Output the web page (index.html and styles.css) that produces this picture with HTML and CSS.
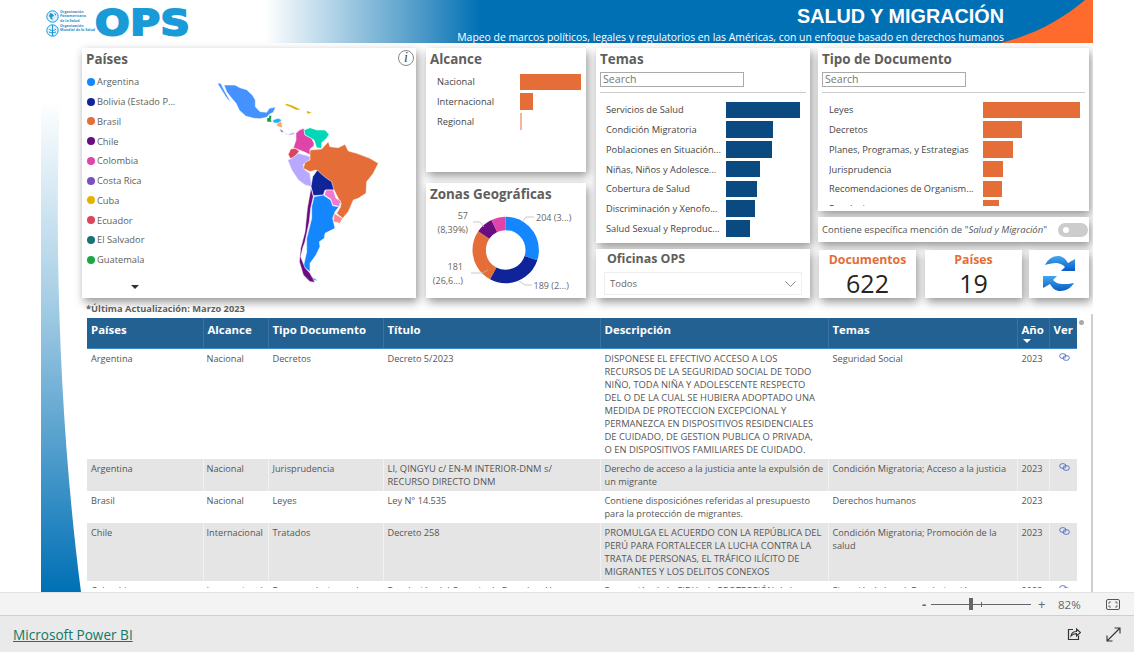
FILE: index.html
```html
<!DOCTYPE html>
<html lang="es">
<head>
  <meta charset="UTF-8" />
  <title>Salud y Migración</title>
  <link rel="stylesheet" href="styles.css">
</head>
<body>
  <div class="app">
    <div class="report">
      <svg class="swoosh" width="82" height="592" viewBox="0 0 82 592">
        <defs>
          <linearGradient id="swoosh-fill" x1="0" y1="0" x2="0" y2="1">
            <stop offset="0" stop-color="#ffffff" />
            <stop offset="0.4" stop-color="#a8cfe6" />
            <stop offset="1" stop-color="#0070b5" />
          </linearGradient>
        </defs>
        <path d="M41 100H60C54 250 60 430 81 592H41Z" fill="url(#swoosh-fill)" />
      </svg>

      <header class="banner">
        <div class="logo">
          <div class="logo-orgs">
            <div class="org">
              <svg class="globe" width="13" height="13" viewBox="0 0 13 13"><circle cx="6.5" cy="6.5" r="5.7" fill="#dff0fa" stroke="#1a9ad6" /><path d="M4 3l3 1 1 2-2 1 1 3-2-1-2-3zM8 3l2 1 0 2z" fill="#1a9ad6" /></svg>
              <span>Organización<br>Panamericana<br>de la Salud</span>
            </div>
            <div class="org">
              <svg class="globe" width="13" height="13" viewBox="0 0 13 13"><circle cx="6.5" cy="6.5" r="5.7" fill="#dff0fa" stroke="#1a9ad6" /><path d="M6.5 1v11M3 5c2 2 5 2 7 0M3 8c2 1 5 1 7 0" fill="none" stroke="#1a9ad6" /></svg>
              <span>Organización<br>Mundial de la Salud</span>
            </div>
          </div>
          <div class="logo-mark">OPS</div>
        </div>
        <div class="banner-text">
          <h1>SALUD Y MIGRACIÓN</h1>
          <p>Mapeo de marcos políticos, legales y regulatorios en las Américas, con un enfoque basado en derechos humanos</p>
        </div>
        <svg class="corner" width="92" height="43" viewBox="0 0 92 43"><path d="M0 43C35 34 60 20 84 0H92V43Z" fill="#ff6b2c" /></svg>
      </header>

      <section class="dash-top">
        <div class="card col-paises">
          <h2>Países</h2>
          <div class="info-icon">i</div>
          <ul class="legend">
            <li><i class="dot c-argentina"></i>Argentina</li>
            <li><i class="dot c-bolivia"></i>Bolivia (Estado P...</li>
            <li><i class="dot c-brasil"></i>Brasil</li>
            <li><i class="dot c-chile"></i>Chile</li>
            <li><i class="dot c-colombia"></i>Colombia</li>
            <li><i class="dot c-costa"></i>Costa Rica</li>
            <li><i class="dot c-cuba"></i>Cuba</li>
            <li><i class="dot c-ecuador"></i>Ecuador</li>
            <li><i class="dot c-salvador"></i>El Salvador</li>
            <li><i class="dot c-guatemala"></i>Guatemala</li>
          </ul>
          <div class="legend-more"></div>
          <svg class="map" width="190" height="220" viewBox="0 0 570 660">
            <g stroke="#fff" stroke-width="1.6" stroke-linejoin="round">
              <path fill="#4392ff" d="M22 25L32 25L45 50L62 80L52 72L38 50Z" />
              <path fill="#4392ff" d="M42 30L75 30L90 38L110 44L127 60L136 75L136 95L150 110L170 112L178 100L197 96L190 112L178 118L170 127L150 131L132 130L108 124L88 106L78 85L62 66L50 50Z" />
              <path fill="#0d9a3c" d="M171 128L177 128L177 120L185 122L183 135L186 141L171 141Z" />
              <path fill="#17b4f0" d="M188 135L205 130L216 135L205 145L190 143Z" />
              <path fill="#f7a468" d="M198 150L213 138L218 158L205 155Z" />
              <path fill="#7a4fc0" d="M207 162L215 165L222 172L215 172Z" />
              <path fill="#d9a0e6" d="M222 172L235 178L250 172L255 178L240 181L228 178Z" />
              <path fill="#e0b400" stroke="none" d="M228 86L245 91L262 99L272 104L258 104L240 95L226 90Z" />
              <path fill="#e0b400" stroke="none" d="M290 107L305 113L292 116Z" />
              <path fill="#e044a8" d="M268 165L282 160L285 180L305 190L312 205L312 212L300 222L302 240L285 232L268 225L250 218L258 195L258 175Z" />
              <path fill="#00d8b8" d="M282 165L300 158L320 165L345 165L357 178L350 190L335 203L335 220L320 218L312 195L295 185L285 180Z" />
              <path fill="#d9465a" d="M242 222L255 220L268 228L252 250L240 250L235 238Z" />
              <path fill="#b9a8ff" d="M233 255L245 250L265 235L285 240L302 245L300 258L280 268L285 285L300 295L305 335L285 330L265 315L245 285Z" />
              <path fill="#e56d38" d="M300 225L335 222L355 200L360 215L385 218L405 208L415 228L440 235L480 250L505 265L490 295L470 320L468 355L445 370L430 375L415 410L398 430L380 415L392 395L390 380L372 345L345 325L330 295L318 285L300 290L280 280L285 262L300 255Z" />
              <path fill="#10249a" d="M322 285L335 298L350 310L365 320L372 345L345 345L340 360L310 362L303 335L308 305Z" />
              <path fill="#f07ad0" d="M348 345L370 345L378 370L392 378L388 395L368 390L362 372L343 360Z" />
              <path fill="#ff8a8a" d="M372 415L398 430L390 445L370 440Z" />
              <path fill="#1487ff" d="M312 365L340 360L362 375L368 392L385 395L395 385L375 410L368 430L375 460L345 475L343 490L328 500L330 515L318 540L300 565L300 590L280 575L290 530L290 490L305 430L305 395Z" />
              <path fill="#1487ff" d="M305 605L325 617L310 615Z" />
              <path fill="#6a0d80" d="M303 338L310 365L302 400L298 440L285 500L278 520L272 545L285 578L300 595L315 622L300 620L280 600L268 560L272 520L285 470L292 400Z" />
            </g>
          </svg>
        </div>

        <div class="col col-mid">
          <div class="card alcance">
            <h2>Alcance</h2>
            <div class="bar-list">
              <div class="bar-row"><span class="bar-label">Nacional</span><span class="bar orange" style="width:61px"></span></div>
              <div class="bar-row"><span class="bar-label">Internacional</span><span class="bar orange" style="width:13px"></span></div>
              <div class="bar-row"><span class="bar-label">Regional</span><span class="bar orange faded" style="width:2px"></span></div>
            </div>
          </div>
          <div class="card zonas">
            <h2>Zonas Geográficas</h2>
            <svg class="donut" width="160" height="115" viewBox="426 183 160 115">
              <g fill="none" stroke-width="13.4" transform="rotate(-90 505.7 250)">
                <circle cx="505.7" cy="250" r="26.5" pathLength="100" stroke="#1487ff" stroke-dasharray="30.04 69.96" />
                <circle cx="505.7" cy="250" r="26.5" pathLength="100" stroke="#10249a" stroke-dasharray="27.84 72.16" stroke-dashoffset="-30.04" />
                <circle cx="505.7" cy="250" r="26.5" pathLength="100" stroke="#e56d38" stroke-dasharray="26.66 73.34" stroke-dashoffset="-57.88" />
                <circle cx="505.7" cy="250" r="26.5" pathLength="100" stroke="#6a0d80" stroke-dasharray="8.39 91.61" stroke-dashoffset="-84.54" />
                <circle cx="505.7" cy="250" r="26.5" pathLength="100" stroke="#e044a8" stroke-dasharray="7.07 92.93" stroke-dashoffset="-92.93" />
              </g>
              <g fill="none" stroke="#bbb" stroke-width="0.8">
                <path d="M522 222L526 217H534" />
                <path d="M519 281L525 285H532" />
                <path d="M484 227L480 222H473" />
                <path d="M488 270L482 273H471" />
              </g>
              <g class="donut-label">
                <text x="536" y="221">204 (3...)</text>
                <text x="533.5" y="289">189 (2...)</text>
                <text x="468" y="219" text-anchor="end">57</text>
                <text x="468" y="232.5" text-anchor="end">(8,39%)</text>
                <text x="463" y="270" text-anchor="end">181</text>
                <text x="463" y="284" text-anchor="end">(26,6...)</text>
              </g>
            </svg>
          </div>
        </div>

        <div class="col col-temas">
          <div class="card temas">
            <h2>Temas</h2>
            <div class="search">Search</div>
            <div class="rule"></div>
            <div class="bar-list">
              <div class="bar-row"><span class="bar-label">Servicios de Salud</span><span class="bar navy" style="width:74px"></span></div>
              <div class="bar-row"><span class="bar-label">Condición Migratoria</span><span class="bar navy" style="width:47px"></span></div>
              <div class="bar-row"><span class="bar-label">Poblaciones en Situación...</span><span class="bar navy" style="width:46px"></span></div>
              <div class="bar-row"><span class="bar-label">Niñas, Niños y Adolesce...</span><span class="bar navy" style="width:34px"></span></div>
              <div class="bar-row"><span class="bar-label">Cobertura de Salud</span><span class="bar navy" style="width:31px"></span></div>
              <div class="bar-row"><span class="bar-label">Discriminación y Xenofo...</span><span class="bar navy" style="width:29px"></span></div>
              <div class="bar-row"><span class="bar-label">Salud Sexual y Reproduc...</span><span class="bar navy" style="width:24px"></span></div>
            </div>
          </div>
          <div class="card oficinas">
            <h2>Oficinas OPS</h2>
            <div class="dropdown">Todos
              <svg width="11" height="6" viewBox="0 0 11 6"><path d="M.5.5l5 5 5-5" fill="none" stroke="#888" /></svg>
            </div>
          </div>
        </div>

        <div class="col col-tipo">
          <div class="card tipo">
            <h2>Tipo de Documento</h2>
            <div class="search">Search</div>
            <div class="rule"></div>
            <div class="bar-list">
              <div class="bar-row"><span class="bar-label">Leyes</span><span class="bar orange" style="width:97px"></span></div>
              <div class="bar-row"><span class="bar-label">Decretos</span><span class="bar orange" style="width:39.5px"></span></div>
              <div class="bar-row"><span class="bar-label">Planes, Programas, y Estrategias</span><span class="bar orange" style="width:30.5px"></span></div>
              <div class="bar-row"><span class="bar-label">Jurisprudencia</span><span class="bar orange" style="width:20.5px"></span></div>
              <div class="bar-row"><span class="bar-label">Recomendaciones de Organism...</span><span class="bar orange" style="width:19.5px"></span></div>
              <div class="bar-row"><span class="bar-label">Resoluciones</span><span class="bar orange" style="width:16px"></span></div>
            </div>
          </div>
          <div class="card contiene">
            <span>Contiene específica mención de "<em>Salud y Migración</em>"</span>
            <div class="toggle"><i></i></div>
          </div>
          <div class="kpi-row">
            <div class="card kpi"><div class="kpi-title">Documentos</div><div class="kpi-value">622</div></div>
            <div class="card kpi"><div class="kpi-title">Países</div><div class="kpi-value">19</div></div>
            <div class="card refresh">
              <svg width="34" height="36" viewBox="0 0 34 36">
                <defs>
                  <linearGradient id="arrow-fill" x1="0" y1="0" x2="0" y2="1">
                    <stop offset="0" stop-color="#43a7f0" />
                    <stop offset="1" stop-color="#0a5cc4" />
                  </linearGradient>
                </defs>
                <path fill="url(#arrow-fill)" d="M3 9C6 3 11 0 16 0C20 0 23 2 26 7L33 3V15H19L23 11C20 8 17 7 14 7C10 7 6 8 3 9Z" />
                <path fill="url(#arrow-fill)" d="M32 27C29 32 24 35 18 35C14 35 11 33 8 28L1 32V20H15L11 24C14 27 17 28 20 28C24 28 28 28 32 27Z" />
              </svg>
            </div>
          </div>
        </div>
      </section>

      <div class="update-note">*Última Actualización: Marzo 2023</div>

      <section class="table-panel">
        <div class="scroll-thumb"></div>
        <div class="table-clip">
          <table class="docs">
            <colgroup>
              <col class="w-pais"><col class="w-alcance"><col class="w-tipo"><col class="w-titulo"><col class="w-desc"><col class="w-temas"><col class="w-anio"><col class="w-ver">
            </colgroup>
            <thead>
              <tr>
                <th>Países</th><th>Alcance</th><th>Tipo Documento</th><th>Título</th><th>Descripción</th><th>Temas</th>
                <th class="sorted">Año<i class="sort-arrow"></i></th><th>Ver</th>
              </tr>
            </thead>
            <tbody>
              <tr>
                <td>Argentina</td><td>Nacional</td><td>Decretos</td><td>Decreto 5/2023</td>
                <td class="caps">DISPONESE EL EFECTIVO ACCESO A LOS RECURSOS DE LA SEGURIDAD SOCIAL DE TODO NIÑO, TODA NIÑA Y ADOLESCENTE RESPECTO DEL O DE LA CUAL SE HUBIERA ADOPTADO UNA MEDIDA DE PROTECCION EXCEPCIONAL Y PERMANEZCA EN DISPOSITIVOS RESIDENCIALES DE CUIDADO, DE GESTION PUBLICA O PRIVADA,<br>O EN DISPOSITIVOS FAMILIARES DE CUIDADO.</td>
                <td>Seguridad Social</td><td>2023</td>
                <td class="link"><svg width="11" height="8" viewBox="0 0 11 8"><g fill="none" stroke="#3a5fc0" stroke-width=".8"><ellipse cx="3.8" cy="3" rx="3.2" ry="2.4" /><ellipse cx="7.2" cy="5" rx="3.2" ry="2.4" /></g></svg></td>
              </tr>
              <tr class="alt">
                <td>Argentina</td><td>Nacional</td><td>Jurisprudencia</td><td class="caps">LI, QINGYU c/ EN-M INTERIOR-DNM s/<br>RECURSO DIRECTO DNM</td>
                <td>Derecho de acceso a la justicia ante la expulsión de un migrante</td>
                <td>Condición Migratoria; Acceso a la justicia</td><td>2023</td>
                <td class="link"><svg width="11" height="8" viewBox="0 0 11 8"><g fill="none" stroke="#3a5fc0" stroke-width=".8"><ellipse cx="3.8" cy="3" rx="3.2" ry="2.4" /><ellipse cx="7.2" cy="5" rx="3.2" ry="2.4" /></g></svg></td>
              </tr>
              <tr>
                <td>Brasil</td><td>Nacional</td><td>Leyes</td><td>Ley N° 14.535</td>
                <td>Contiene disposiciónes referidas al presupuesto para la protección de migrantes.</td>
                <td>Derechos humanos</td><td>2023</td><td></td>
              </tr>
              <tr class="alt">
                <td>Chile</td><td>Internacional</td><td>Tratados</td><td>Decreto 258</td>
                <td class="caps">PROMULGA EL ACUERDO CON LA REPÚBLICA DEL PERÚ PARA FORTALECER LA LUCHA CONTRA LA TRATA DE PERSONAS, EL TRÁFICO ILÍCITO DE MIGRANTES Y LOS DELITOS CONEXOS</td>
                <td>Condición Migratoria; Promoción de la salud</td><td>2023</td>
                <td class="link"><svg width="11" height="8" viewBox="0 0 11 8"><g fill="none" stroke="#3a5fc0" stroke-width=".8"><ellipse cx="3.8" cy="3" rx="3.2" ry="2.4" /><ellipse cx="7.2" cy="5" rx="3.2" ry="2.4" /></g></svg></td>
              </tr>
              <tr>
                <td>Colombia</td><td>Internacional</td><td>Recomendaciones de Organismos</td><td>Resolución del Consejo de Derechos Humanos</td>
                <td>Promoción de la CIDH y la PROTECCIÓN de los</td>
                <td>Situación Laboral; Regularización</td><td>2023</td>
                <td class="link"><svg width="11" height="8" viewBox="0 0 11 8"><g fill="none" stroke="#3a5fc0" stroke-width=".8"><ellipse cx="3.8" cy="3" rx="3.2" ry="2.4" /><ellipse cx="7.2" cy="5" rx="3.2" ry="2.4" /></g></svg></td>
              </tr>
            </tbody>
          </table>
        </div>
      </section>
    </div>

    <div class="zoom-bar">
      <span class="zoom-btn">-</span>
      <div class="slider"><i class="thumb"></i><i class="tick"></i></div>
      <span class="zoom-btn plus">+</span>
      <span class="zoom-val">82%</span>
      <svg class="fit-icon" width="14" height="11" viewBox="0 0 14 11"><rect x=".5" y=".5" width="13" height="10" rx="1.5" fill="none" stroke="#555" /><path d="M3 5V3H5M11 6v2H9M9 3h2v2M5 8H3V6" fill="none" stroke="#555" stroke-width=".8" /></svg>
    </div>

    <footer class="footer">
      <a class="pbi-link" href="#">Microsoft Power BI</a>
      <div class="footer-icons">
        <svg width="14" height="14" viewBox="0 0 14 14"><path d="M6 2.5H1.5V12.5H11.5V8.5" fill="none" stroke="#333" stroke-width="1.2" /><path d="M4 9C4.5 6 7 4.5 9.5 4.5V2L13.5 5.5L9.5 9V6.6C7.5 6.6 5.5 7.2 4 9Z" fill="none" stroke="#333" stroke-width="1.1" /></svg>
        <svg width="15" height="15" viewBox="0 0 15 15"><path d="M1 14L14 1M8.5 1H14V6.5M1 8.5V14H6.5" fill="none" stroke="#333" stroke-width="1.1" /></svg>
      </div>
    </footer>
  </div>
</body>
</html>
```

FILE: styles.css
```css
* {
  box-sizing: border-box;
}

body {
  margin: 0;
  background: #fff;
  color: #333;
  font-family: "Open Sans", "Noto Sans", sans-serif;
  font-size: 9.3px;
}

.app {
  display: flex;
  flex-direction: column;
  height: 100vh;
  overflow: hidden;
}

.report {
  position: relative;
  flex: 1;
  width: 1093px;
  overflow: hidden;
  background: #fff;
}

.swoosh {
  position: absolute;
  left: 0;
  top: 0;
}

/* banner */
.banner {
  position: relative;
  display: flex;
  justify-content: space-between;
  height: 43px;
  background: linear-gradient(90deg, #fff 265px, #4d9ac8 420px, #0070b5 480px);
}

.logo {
  display: flex;
  gap: 3px;
  padding: 10px 0 0 46px;
}

.logo-orgs {
  display: flex;
  flex-direction: column;
  width: 46px;
  gap: 1px;
}

.org {
  display: flex;
  gap: 1px;
  height: 13px;
  color: #2a8fc8;
  font-size: 3.6px;
  line-height: 4.4px;
  font-weight: 700;
  white-space: nowrap;
}

.globe {
  flex: none;
}

.logo-mark {
  margin-top: -3px;
  font-family: "DejaVu Sans", sans-serif;
  font-weight: 700;
  font-size: 36px;
  line-height: 32px;
  letter-spacing: 0.5px;
  color: #1a9ad6;
  -webkit-text-stroke: 2px #1a9ad6;
  transform: scaleX(1.13);
  transform-origin: left;
}

.banner-text {
  position: relative;
  z-index: 1;
  display: flex;
  flex-direction: column;
  align-items: flex-end;
  padding: 4px 89px 0 0;
  color: #fff;
}

.banner-text h1 {
  margin: 0;
  font-family: "Liberation Sans", sans-serif;
  font-size: 19.8px;
  line-height: 24px;
  font-weight: 700;
}

.banner-text p {
  margin: 2px 0 0;
  font-size: 10.4px;
  line-height: 14px;
  white-space: nowrap;
}

.corner {
  position: absolute;
  right: 0;
  top: 0;
}

/* top visuals */
.dash-top {
  position: relative;
  display: flex;
  height: 250px;
  margin: 5px 0 0 82px;
}

.card {
  position: relative;
  background: #fff;
  box-shadow: 2px 4px 9px rgba(0, 0, 0, 0.42);
}

.card h2 {
  margin: 0;
  color: #605e5c;
  font-size: 13.4px;
  line-height: 17px;
  font-weight: 700;
}

.col {
  display: flex;
  flex-direction: column;
}

.col-paises {
  width: 334px;
  margin-right: 10px;
  padding: 3px 4px;
}

.info-icon {
  position: absolute;
  right: 2px;
  top: 2px;
  width: 16px;
  height: 16px;
  border: 1px solid #888;
  border-radius: 50%;
  color: #444;
  font-family: "Liberation Serif", serif;
  font-style: italic;
  font-size: 14px;
  line-height: 14px;
  text-align: center;
}

.legend {
  margin: 4px 0 0;
  padding: 0 0 0 1px;
  list-style: none;
  color: #605e5c;
}

.legend li {
  display: flex;
  align-items: center;
  gap: 2px;
  height: 19.75px;
}

.dot {
  width: 8px;
  height: 8px;
  border-radius: 50%;
}

.c-argentina { background: #1487ff; }
.c-bolivia { background: #10249a; }
.c-brasil { background: #e56d38; }
.c-chile { background: #6a0d80; }
.c-colombia { background: #e044a8; }
.c-costa { background: #7a4fc0; }
.c-cuba { background: #e0b400; }
.c-ecuador { background: #d9465a; }
.c-salvador { background: #197278; }
.c-guatemala { background: #1aa843; }

.legend-more {
  position: absolute;
  left: 49px;
  top: 237px;
  border-style: solid;
  border-width: 4px 4px 0;
  border-color: #333 transparent transparent;
}

.map {
  position: absolute;
  left: 128px;
  top: 27px;
}

.col-mid {
  width: 160px;
  margin-right: 10px;
  gap: 11px;
}

.alcance {
  height: 124px;
  padding: 3px 4px;
}

.alcance .bar-list {
  margin-top: 4px;
  padding-left: 7px;
}

.alcance .bar-label {
  width: 83px;
}

.zonas {
  height: 115px;
  padding: 3px 4px;
}

.donut {
  position: absolute;
  left: 0;
  top: 0;
}

.donut-label {
  fill: #666;
  font-size: 9px;
}

.col-temas {
  width: 214px;
  margin-right: 8px;
  gap: 6px;
}

.temas {
  height: 195px;
  padding: 3px 4px 0;
}

.search {
  width: 144px;
  height: 15px;
  margin-top: 4px;
  border: 1px solid #aaa;
  color: #777;
  font-size: 10.6px;
  line-height: 13px;
  padding-left: 2px;
}

.rule {
  height: 1px;
  margin: 5px 0 7px;
  background: #ccc;
}

.bar-row {
  display: flex;
  align-items: center;
  height: 19.75px;
  color: #444;
}

.temas .bar-list {
  padding-left: 6px;
}

.temas .bar-label {
  width: 120px;
}

.bar-label {
  flex: none;
  white-space: nowrap;
  overflow: hidden;
}

.bar {
  flex: none;
  height: 16.5px;
}

.orange { background: #e56d38; }
.navy { background: #0a4a80; }
.faded { opacity: 0.5; }

.oficinas {
  height: 49px;
  padding: 1px 8px 0;
}

.oficinas h2 {
  padding-left: 3px;
  font-size: 12.4px;
}

.dropdown {
  display: flex;
  align-items: center;
  justify-content: space-between;
  height: 23px;
  margin-top: 5px;
  padding: 0 5px;
  border: 1px solid #eee;
  color: #666;
  font-size: 9.5px;
}

.col-tipo {
  width: 271px;
  gap: 6px;
}

.tipo {
  height: 163px;
  padding: 3px 4px 0;
  overflow: hidden;
}

.tipo .bar-list {
  height: 106px;
  padding-left: 7px;
  overflow: hidden;
}

.tipo .bar-label {
  width: 153.5px;
}

.contiene {
  display: flex;
  align-items: center;
  justify-content: space-between;
  height: 25px;
  padding: 0 1px 0 4px;
  color: #555;
  font-size: 9.5px;
}

.toggle {
  width: 30px;
  height: 14px;
  padding: 4px 5px;
  border-radius: 7px;
  background: #ccc;
}

.toggle i {
  display: block;
  width: 6px;
  height: 6px;
  border-radius: 50%;
  background: #fff;
}

.kpi-row {
  display: flex;
  height: 48px;
  margin-top: 2px;
  padding-left: 1px;
}

.kpi {
  width: 97px;
  margin-right: 9px;
  text-align: center;
}

.kpi + .kpi {
  margin-right: 7px;
}

.kpi-title {
  padding-top: 2px;
  color: #e56d38;
  font-size: 12.3px;
  line-height: 16px;
  font-weight: 700;
}

.kpi-value {
  padding-top: 1px;
  color: #252423;
  font-size: 25px;
  line-height: 28px;
}

.refresh {
  display: flex;
  align-items: center;
  justify-content: center;
  width: 60px;
}

/* table */
.update-note {
  position: relative;
  height: 12px;
  margin: 5px 0 0 86px;
  color: #605e5c;
  font-size: 9.3px;
  line-height: 12px;
  font-weight: 700;
}

.table-panel {
  position: relative;
  width: 1011px;
  margin: -1px 0 0 82px;
  height: 278px;
  padding: 4px 0 0 5px;
  background: #fff;
  border-right: 2px solid #d0d0d0;
}

.scroll-thumb {
  position: absolute;
  left: 997px;
  top: 6px;
  width: 5px;
  height: 5px;
  border-radius: 50%;
  background: #aaa;
}

.table-clip {
  height: 270px;
  overflow: hidden;
}

.docs {
  table-layout: fixed;
  width: 990px;
  border-collapse: collapse;
  color: #555;
  font-size: 9.2px;
  line-height: 13px;
}

.w-pais { width: 116px; }
.w-alcance { width: 65px; }
.w-tipo { width: 115px; }
.w-titulo { width: 217px; }
.w-desc { width: 228px; }
.w-temas { width: 189px; }
.w-anio { width: 32px; }
.w-ver { width: 28px; }

.docs th {
  position: relative;
  height: 30px;
  padding: 0 4px 6px;
  background: #236192;
  border-bottom: 1px solid #3b8ad0;
  border-left: 1px solid #3a719e;
  color: #fff;
  font-size: 11.4px;
  text-align: left;
  white-space: nowrap;
}

.docs th:first-child {
  border-left: 0;
}

.sort-arrow {
  position: absolute;
  left: 5px;
  bottom: 5px;
  border-style: solid;
  border-width: 4px 4px 0;
  border-color: #fff transparent transparent;
}

.docs td {
  padding: 3px 3px 3px 4px;
  vertical-align: top;
  border-left: 1px solid rgba(255, 255, 255, 0.5);
}

.docs td:first-child {
  border-left: 0;
}

.docs td:nth-child(2) {
  padding-left: 3px;
}

.docs .caps {
  font-size: 9.4px;
}

.docs .alt td {
  background: #e5e5e5;
}

.docs td.link {
  padding-left: 9px;
  line-height: 8px;
  padding-top: 4px;
}

/* bottom bars */
.zoom-bar {
  display: flex;
  align-items: center;
  height: 23px;
  padding-left: 922px;
  background: #f3f3f3;
  border-top: 1px solid #e2e2e2;
  color: #666;
}

.zoom-btn {
  width: 8px;
  font-size: 13px;
  font-weight: 700;
  line-height: 14px;
}

.zoom-btn.plus {
  width: 20px;
  margin-left: 7px;
  font-weight: 400;
}

.slider {
  position: relative;
  width: 100px;
  height: 1px;
  margin-left: 1px;
  background: #666;
}

.thumb {
  position: absolute;
  left: 38px;
  top: -6px;
  width: 4px;
  height: 12px;
  background: #666;
}

.tick {
  position: absolute;
  left: 50px;
  top: -2px;
  width: 1px;
  height: 5px;
  background: #666;
}

.zoom-val {
  width: 48px;
  font-size: 11.5px;
}

.footer {
  display: flex;
  align-items: center;
  justify-content: space-between;
  height: 37px;
  padding: 0 13px;
  background: #eaeaea;
  border-top: 1px solid #cfcfcf;
}

.pbi-link {
  color: #117865;
  font-size: 13.6px;
}

.footer-icons {
  display: flex;
  gap: 25px;
  align-items: center;
}
```
